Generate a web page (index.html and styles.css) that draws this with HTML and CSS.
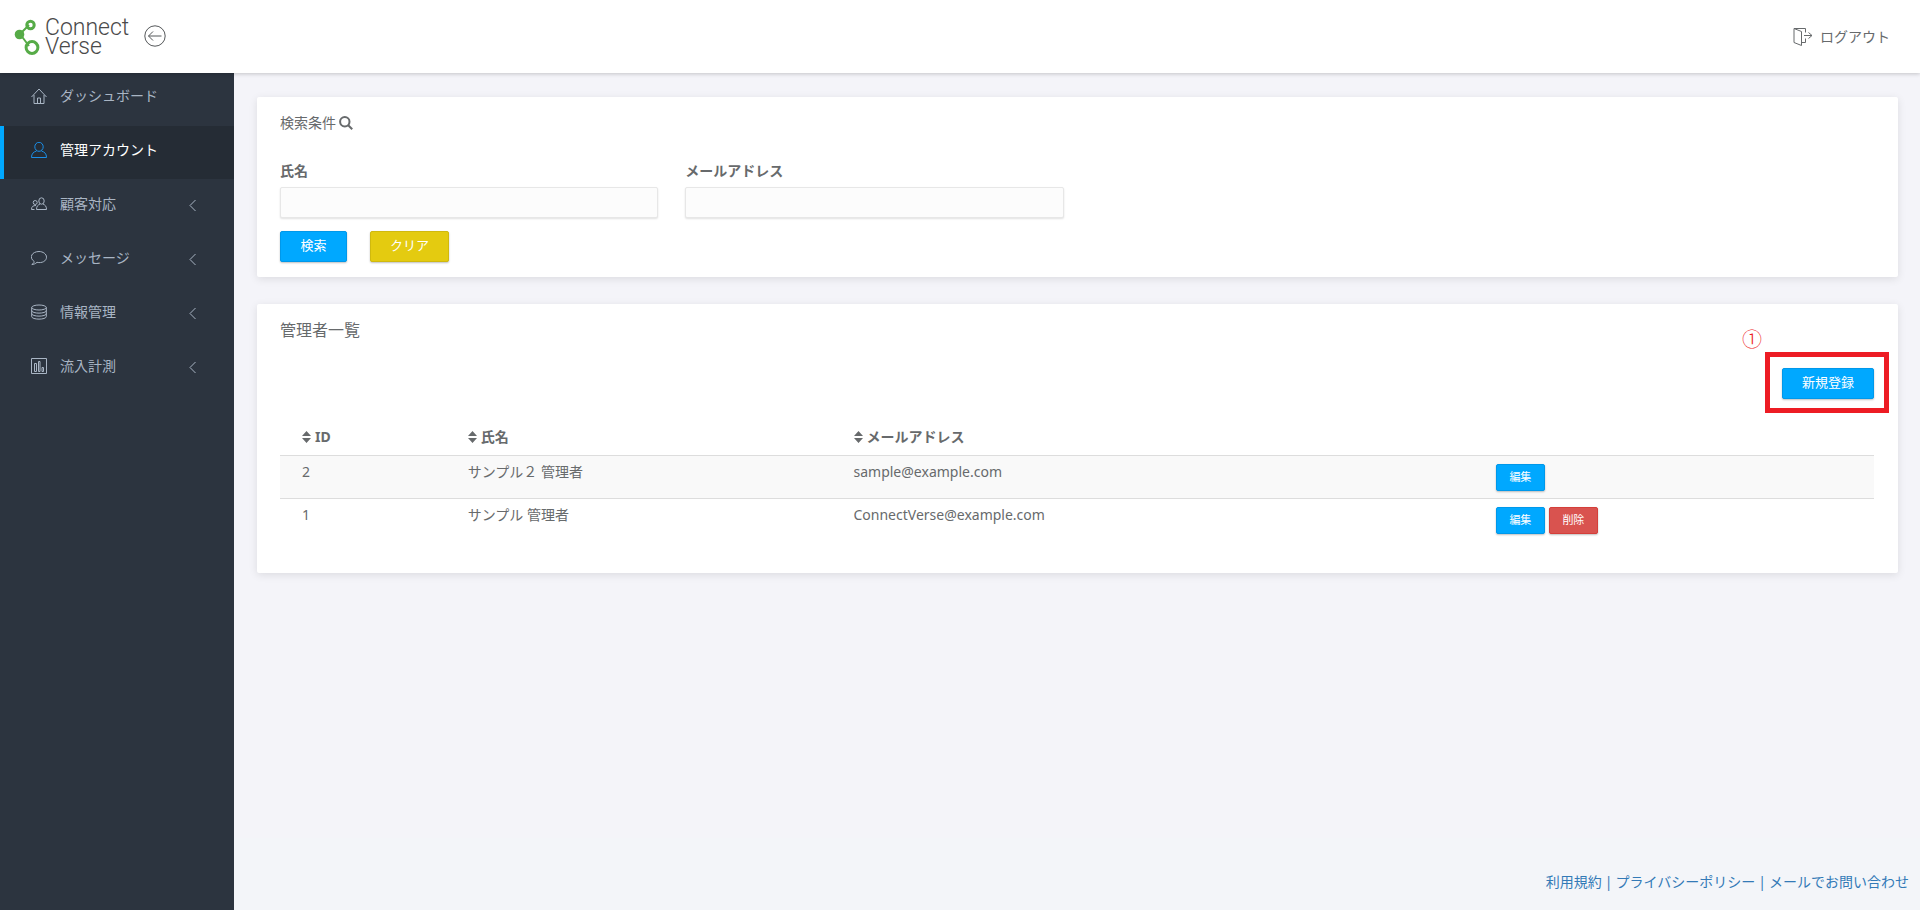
FILE: index.html
```
<!DOCTYPE html>
<html lang="ja">
<head>
<meta charset="utf-8">
<title>管理アカウント | Connect Verse</title>
<link rel="stylesheet" href="styles.css">
</head>
<body>
<svg class="defs" aria-hidden="true">
  <symbol id="chev" viewBox="0 0 8 13"><path d="M6.500 1L1 6.500L6.500 12"/></symbol>
  <symbol id="sort" viewBox="0 0 9 12"><path d="M4.500 0L9 5H0zM4.500 12L0 7H9z"/></symbol>
</svg>
<header class="topbar">
  <a class="brand" href="#" aria-label="Connect Verse">
    <svg class="brand-mark" viewBox="0 0 26 36" aria-hidden="true">
      <path d="M6 15L15 6M6 15L15 27"/>
      <circle class="solid" cx="5.500" cy="15.500" r="4.800"/>
      <circle cx="16.500" cy="6" r="3.700"/>
      <circle cx="18" cy="28.500" r="5.900"/>
    </svg>
    <span class="brand-name">Connect<br>Verse</span>
  </a>
  <button class="toggle" type="button" aria-label="メニューを閉じる">
    <svg viewBox="0 0 22 22" aria-hidden="true"><circle cx="11" cy="11" r="10.200"/><path d="M17.500 11H4.500M9 6.500L4.500 11L9 15.500"/></svg>
  </button>
  <a class="logout" href="#">
    <svg viewBox="0 0 20 18" aria-hidden="true"><path d="M1 .5H12.500V4.500M12.500 10.500V14.500H8.500M1 .5L8.500 3.500V17.500L1 14.500zM11 7.500H19M15.500 4.500L19 7.500L15.500 10.500"/></svg>
    <span>ログアウト</span>
  </a>
</header>
<div class="shell">
  <nav class="side">
    <a class="item" href="#"><svg class="ico" viewBox="0 0 16 16"><path d="M.5 9L8 1L15.500 9M3 7V15.500H13V7M6.500 15.500V10H9.500V15.500"/></svg><span>ダッシュボード</span></a>
    <a class="item active" href="#"><svg class="ico" viewBox="0 0 16 16"><ellipse cx="8" cy="4.800" rx="4.200" ry="4.500"/><path d="M5.500 9C2.500 10 .5 11.500 .5 15.500H15.500C15.500 11.500 13.500 10 10.500 9"/></svg><span>管理アカウント</span></a>
    <a class="item" href="#"><svg class="ico" viewBox="0 0 16 16"><ellipse cx="10.500" cy="5" rx="2.700" ry="3.200"/><path d="M9 8C7 9 5.500 10 5.500 13.500H15.500C15.500 10 14 9 12 8M5 9.500C2 9.500 .5 10.500 .5 13.500H3.500"/><circle cx="4.200" cy="6.500" r="2"/></svg><span>顧客対応</span><svg class="chev"><use href="#chev"/></svg></a>
    <a class="item" href="#"><svg class="ico" viewBox="0 0 16 16"><path d="M3.200 11.500C-2.500 7.500 1 1.500 8 1.500C12 1.500 15.500 4 15.500 7.200C15.500 11 11 13.500 6 12.300C4.500 13.800 2.500 14.500 .8 14.500C2.500 13.500 3.200 12.500 3.200 11.500z"/></svg><span>メッセージ</span><svg class="chev"><use href="#chev"/></svg></a>
    <a class="item" href="#"><svg class="ico" viewBox="0 0 16 16"><ellipse cx="8" cy="3.500" rx="7.300" ry="2.500"/><path d="M.7 3.500V12.500C.7 16 15.300 16 15.300 12.500V3.500M.7 6.500C.7 10 15.300 10 15.300 6.500M.7 9.500C.7 13 15.300 13 15.300 9.500"/></svg><span>情報管理</span><svg class="chev"><use href="#chev"/></svg></a>
    <a class="item" href="#"><svg class="ico" viewBox="0 0 16 16"><path d="M.5 .5H15.500V15.500H.5zM3.500 13.500V5.500H5.500V13.500zM7.500 13.500V3.500H9V13.500zM11 13.500V9.500H12.500V13.500z"/></svg><span>流入計測</span><svg class="chev"><use href="#chev"/></svg></a>
  </nav>
  <div class="page">
    <main class="content">
      <section class="card search">
        <h2 class="search-title">検索条件
          <svg viewBox="0 0 14 14" aria-hidden="true"><circle cx="5.800" cy="5.800" r="4.700"/><path d="M9.200 9.200L13.200 13.200"/></svg>
        </h2>
        <form>
          <div class="fields">
            <div class="field"><label for="name">氏名</label><input id="name" type="text"></div>
            <div class="field"><label for="mail">メールアドレス</label><input id="mail" type="text"></div>
          </div>
          <div class="actions">
            <button class="btn blue" type="button">検索</button>
            <button class="btn yellow" type="reset">クリア</button>
          </div>
        </form>
      </section>
      <section class="card list">
        <h2 class="list-title">管理者一覧</h2>
        <div class="list-tools">
          <div class="callout">
            <button class="btn blue" type="button">新規登録</button>
            <span class="callout-no">①</span>
          </div>
        </div>
        <table>
          <colgroup><col class="c-id"><col class="c-name"><col class="c-mail"><col></colgroup>
          <thead>
            <tr>
              <th><svg class="sort"><use href="#sort"/></svg>ID</th>
              <th><svg class="sort"><use href="#sort"/></svg>氏名</th>
              <th><svg class="sort"><use href="#sort"/></svg>メールアドレス</th>
              <th></th>
            </tr>
          </thead>
          <tbody>
            <tr><td>2</td><td>サンプル２ 管理者</td><td>sample@example.com</td><td><div class="row-actions"><button class="btn small blue" type="button">編集</button></div></td></tr>
            <tr><td>1</td><td>サンプル 管理者</td><td>ConnectVerse@example.com</td><td><div class="row-actions"><button class="btn small blue" type="button">編集</button><button class="btn small red" type="button">削除</button></div></td></tr>
          </tbody>
        </table>
      </section>
    </main>
    <footer class="footer"><a href="#">利用規約</a><span>|</span><a href="#">プライバシーポリシー</a><span>|</span><a href="#">メールでお問い合わせ</a></footer>
  </div>
</div>
</body>
</html>
```

FILE: styles.css
```
* { box-sizing: border-box; }
body {
  margin: 0;
  min-height: 100vh;
  display: flex;
  flex-direction: column;
  background: #f4f4f9;
  color: #676a6c;
  font: 14px/20px "Noto Sans", "Noto Sans CJK JP", sans-serif;
}
a { color: inherit; text-decoration: none; }
svg { fill: none; stroke: currentColor; flex: none; }
.defs { position: absolute; width: 0; height: 0; }

.topbar {
  height: 73px;
  display: flex;
  align-items: center;
  padding: 0 30px 0 14px;
  background: #fff;
  box-shadow: 0 1px 4px rgba(0, 0, 0, .2);
  z-index: 1;
}
.brand { display: flex; align-items: center; gap: 5px; color: #4a4a4a; }
.brand-mark { width: 26px; height: 36px; color: #56ab47; stroke-width: 2; }
.brand-mark circle { stroke-width: 3; }
.brand-mark .solid { fill: currentColor; stroke: none; }
.brand-name { padding-top: 1px; font: 300 23px/19px "Roboto", sans-serif; }
.toggle { display: flex; margin: 0 auto 2px 15px; padding: 0; border: 0; background: none; color: #55585a; }
.toggle svg { width: 22px; height: 22px; }
.logout { display: flex; align-items: center; gap: 7px; }
.logout svg { width: 20px; height: 18px; }

.shell { flex: 1; display: flex; }
.side { width: 234px; flex: none; background: #2c343f; color: #a9b5c4; }
.item {
  height: 53px;
  margin-bottom: 1px;
  display: flex;
  align-items: center;
  gap: 13px;
  padding: 0 37px 6px 27px;
  border-left: 4px solid transparent;
}
.item:first-child { height: 52px; }
.item.active { background: #252c35; border-color: #00a8ff; color: #fff; }
.ico { width: 16px; height: 16px; }
.active .ico { color: #1b8fe8; }
.chev { width: 8px; height: 13px; margin: 3px 0 0 auto; }

.page { flex: 1; min-width: 0; display: flex; flex-direction: column; }
.content { flex: 1; padding: 24px 22px 0 23px; }
.card {
  background: #fff;
  border-radius: 2px;
  padding: 0 24px 0 23px;
  box-shadow: 0 2px 8px rgba(0, 0, 0, .1);
}
.search { padding-top: 16px; padding-bottom: 15px; margin-bottom: 27px; }
h2 { margin: 0; font-weight: 400; }
.search-title { display: flex; align-items: center; gap: 3px; font-size: 14px; line-height: 20px; margin-bottom: 28px; }
.search-title svg { width: 14px; height: 14px; stroke-width: 2; }
.fields { display: grid; grid-template-columns: repeat(4, 1fr); gap: 27px; }
.field { display: flex; flex-direction: column; gap: 6px; }
label { font-weight: 700; }
input {
  width: 100%;
  height: 31px;
  border: 1px solid #e7e7e7;
  border-radius: 2px;
  background: #fcfcfc;
  font: inherit;
  padding: 0 8px;
  box-shadow: 0 1px 2px rgba(0, 0, 0, .12);
}
.actions { display: flex; gap: 23px; margin-top: 13px; }
.btn {
  height: 31px;
  min-width: 67px;
  padding: 0 19px 3px;
  border: 1px solid;
  border-radius: 2px;
  color: #fff;
  font: 400 13px/20px "Noto Sans", "Noto Sans CJK JP", sans-serif;
  white-space: nowrap;
  box-shadow: 0 1px 2px rgba(0, 0, 0, .25);
}
.blue { background: #00a8ff; border-color: #0098ea; }
.yellow { background: #e4cb10; border-color: #d0b90e; }
.red { background: #d9534f; border-color: #d43f3a; }

.list { padding-top: 16px; padding-bottom: 32px; }
.list-title { font-size: 16px; line-height: 20px; }
.list-tools { display: flex; justify-content: flex-end; padding-top: 28px; margin-bottom: 28px; }
.callout { position: relative; display: flex; }
.callout::after {
  content: "";
  position: absolute;
  inset: -16px -15px -14px -17px;
  border: 5px solid #ed1c24;
  pointer-events: none;
}
.callout-no { position: absolute; right: 112px; top: -38px; color: #ed1c24; font-size: 20px; font-weight: 300; line-height: 20px; }
table { width: 100%; border-collapse: collapse; table-layout: fixed; }
.c-id { width: 10.4%; }
.c-name { width: 24.2%; }
.c-mail { width: 40.3%; }
th { text-align: left; padding: 0 22px 8px; }
td { vertical-align: top; border-top: 1px solid #ddd; padding: 7px 22px; line-height: 18px; }
tbody tr:nth-child(odd) { background: #f9f9f9; }
.sort { width: 9px; height: 12px; margin-right: 4px; vertical-align: -1px; fill: currentColor; stroke: none; }
.row-actions { display: flex; gap: 4px; padding-top: 1px; }
.small { height: 27px; min-width: 49px; padding: 0 12px 2px; font-size: 11px; line-height: 16px; }

.footer {
  height: 72px;
  display: flex;
  align-items: center;
  justify-content: flex-end;
  gap: 3px;
  padding: 16px 11px 0 0;
  background: #f3f5f9;
  color: #337ab7;
}
```
